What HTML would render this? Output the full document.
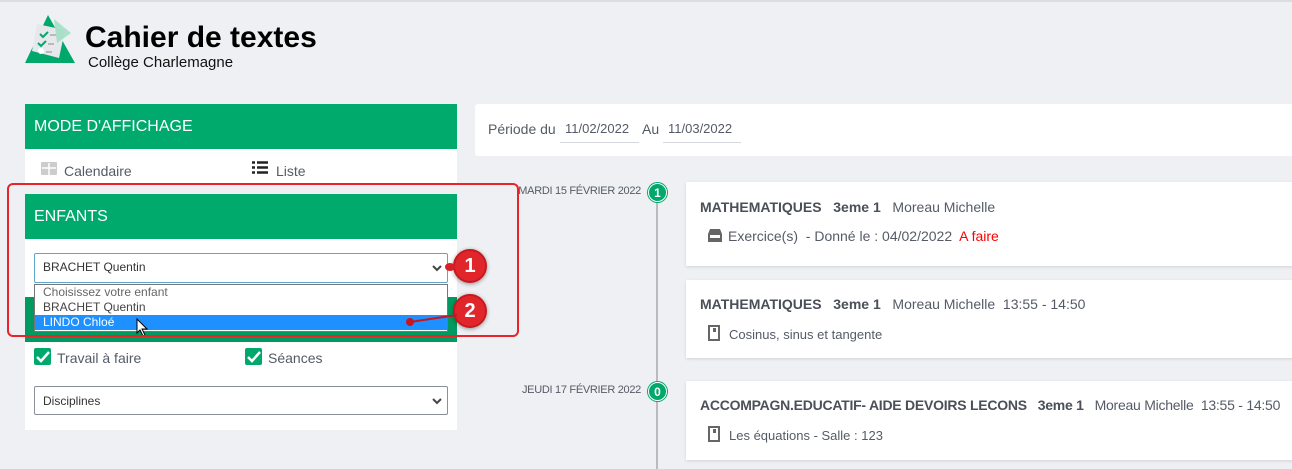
<!DOCTYPE html>
<html><head><meta charset="utf-8"><style>
*{box-sizing:border-box;margin:0;padding:0}
body{width:1292px;height:469px;overflow:hidden;background:#eef0f3;font-family:"Liberation Sans",sans-serif;color:#555b66;position:relative}
.a{position:absolute}
.g{background:#00aa6c;color:#fff;font-size:16px;padding-left:9px;display:flex;align-items:center}
.w{background:#fff}
.card{background:#fff;left:686px;width:620px;box-shadow:0 1px 3px rgba(0,0,0,.12)}
.t{font-size:14px;color:#555b66;white-space:nowrap}
b{color:#4a4f58}
.dot{width:19px;height:19px;border-radius:50%;background:#00a86b;color:#fff;font-size:12px;font-weight:bold;text-align:center;line-height:19px;border:1px solid #fff;box-shadow:0 0 0 1px #00a86b}
.num{width:34px;height:34px;border-radius:50%;background:#e0262b;border:2px solid #c81a1e;color:#fff;font-weight:bold;font-size:20px;text-align:center;line-height:30px;box-shadow:0 1px 4px rgba(0,0,0,.4)}
.cb{width:17px;height:17px;background:#00a86b;border-radius:2px}
</style></head><body>
<div class="a" style="left:0;top:0;width:1292px;height:2px;background:#dcdde0"></div>
<svg class="a" style="left:24px;top:13px" width="52" height="50" viewBox="0 0 52 50">
<polygon points="24,2 51,50 1,50" fill="#00a86b"/>
<polygon points="13,11 41,17 35,45 8,38" fill="#e6e8eb"/>
<polygon points="30,6 47,20 33,30" fill="#8fdcbb" opacity=".7"/>
<path d="M16,21l3,3 5,-5M14,30l3,3 5,-5" stroke="#00a86b" stroke-width="2" fill="none"/>
<path d="M26,22h6M24,31h6M22,39h6" stroke="#aaa" stroke-width="1.5"/>
<circle cx="17" cy="38" r="3" fill="#fff"/>
</svg>
<div class="a" style="left:85px;top:21px;font-size:30px;font-weight:bold;color:#000">Cahier de textes</div>
<div class="a" style="left:88px;top:54px;font-size:15px;color:#111">Collège Charlemagne</div>

<div class="a g" style="left:25px;top:104px;width:432px;height:45px">MODE D'AFFICHAGE</div>
<div class="a w" style="left:25px;top:149px;width:432px;height:34px"></div>
<svg class="a" style="left:41px;top:162px" width="16" height="14"><rect x="0" y="0" width="16" height="13" rx="1" fill="#ccc"/><path d="M1,6h14M8,1v12" stroke="#fff" stroke-width="1.5"/></svg>
<div class="a t" style="left:64px;top:163px;font-size:14px">Calendaire</div>
<svg class="a" style="left:252px;top:161px" width="16" height="14"><path d="M0,1.5h3M5,1.5h11M0,6.5h3M5,6.5h11M0,11.5h3M5,11.5h11" stroke="#222" stroke-width="2.5"/></svg>
<div class="a t" style="left:276px;top:163px">Liste</div>

<div class="a g" style="left:25px;top:194px;width:432px;height:45px">ENFANTS</div>
<div class="a w" style="left:25px;top:239px;width:432px;height:60px"></div>
<div class="a" style="left:34px;top:253px;width:414px;height:30px;border:1px solid #5fa7c8;border-radius:2px;background:#fff;font-size:12px;color:#333;padding:6px 8px">BRACHET Quentin<svg style="position:absolute;right:5px;top:11px" width="10" height="7"><path d="M1,1l4,4 4,-4" stroke="#444" stroke-width="2" fill="none"/></svg></div>
<div class="a g" style="left:25px;top:297px;width:432px;height:45px;background:#009a60"></div>
<div class="a" style="left:34px;top:284px;width:414px;height:48px;background:#fff;border:1px solid #777;font-size:12px;line-height:15px">
<div style="padding-left:8px;color:#666">Choisissez votre enfant</div>
<div style="padding-left:8px;color:#444">BRACHET Quentin</div>
<div style="padding-left:8px;background:#1e90ff;color:#fff">LINDO Chloé</div></div>
<svg class="a" style="left:136px;top:318px" width="14" height="20"><path d="M1,1v14l3,-3 3,6 2,-1 -3,-6h5z" fill="#fff" stroke="#000"/></svg>
<div class="a w" style="left:25px;top:342px;width:432px;height:88px"></div>
<div class="a cb" style="left:34px;top:348px"></div>
<svg class="a" style="left:36px;top:350px" width="14" height="13"><path d="M1,7l4,4 8,-9" stroke="#fff" stroke-width="2.5" fill="none"/></svg>
<div class="a t" style="left:57px;top:350px">Travail à faire</div>
<div class="a cb" style="left:245px;top:348px"></div>
<svg class="a" style="left:247px;top:350px" width="14" height="13"><path d="M1,7l4,4 8,-9" stroke="#fff" stroke-width="2.5" fill="none"/></svg>
<div class="a t" style="left:268px;top:350px">Séances</div>
<div class="a" style="left:34px;top:386px;width:414px;height:29px;border:1px solid #8a8f99;border-radius:2px;background:#fff;font-size:12px;color:#333;padding:7px 8px">Disciplines<svg style="position:absolute;right:5px;top:11px" width="10" height="7"><path d="M1,1l4,4 4,-4" stroke="#444" stroke-width="2" fill="none"/></svg></div>

<div class="a" style="left:7px;top:183px;width:512px;height:154px;border:2px solid #e8232a;border-radius:6px"></div>
<div class="a num" style="left:453px;top:249px">1</div>
<div class="a" style="left:445px;top:263px;width:10px;height:8px;border-radius:50%;background:#d81e27"></div>
<div class="a num" style="left:453px;top:294px">2</div>
<svg class="a" style="left:400px;top:305px" width="60" height="25"><path d="M10,17L57,10" stroke="#c8151f" stroke-width="2"/><circle cx="10" cy="17" r="4" fill="#c8151f"/></svg>

<div class="a w" style="left:475px;top:104px;width:830px;height:52px;border-radius:3px"></div>
<div class="a t" style="left:488px;top:121px">Période du</div>
<div class="a t" style="left:565px;top:121px;font-size:13px">11/02/2022</div>
<div class="a" style="left:560px;top:142px;width:79px;height:1px;background:#d6d8de"></div>
<div class="a t" style="left:642px;top:121px">Au</div>
<div class="a t" style="left:668px;top:121px;font-size:13px">11/03/2022</div>
<div class="a" style="left:663px;top:142px;width:78px;height:1px;background:#d6d8de"></div>

<div class="a" style="left:656px;top:195px;width:2px;height:274px;background:#b9bbbf"></div>
<div class="a t" style="left:512px;top:185px;font-size:11px;width:129px;text-align:right;letter-spacing:-.3px">MARDI 15 FÉVRIER 2022</div>
<div class="a dot" style="left:648px;top:183px">1</div>
<div class="a t" style="left:512px;top:384px;font-size:11px;width:129px;text-align:right;letter-spacing:-.3px">JEUDI 17 FÉVRIER 2022</div>
<div class="a dot" style="left:648px;top:382px">0</div>

<div class="a card" style="top:182px;height:84px"></div>
<div class="a t" style="left:700px;top:199px"><b>MATHEMATIQUES</b>&nbsp;&nbsp; <b>3eme 1</b>&nbsp;&nbsp; Moreau Michelle</div>
<svg class="a" style="left:708px;top:229px" width="14" height="13"><path d="M0,5l2,-5h10l2,5v8h-14z" fill="#666"/><rect x="2" y="6" width="10" height="3" fill="#fff"/></svg>
<div class="a t" style="left:728px;top:228px">Exercice(s)&nbsp; - Donné le : 04/02/2022&nbsp; <span style="color:#f00">A faire</span></div>

<div class="a card" style="top:280px;height:78px"></div>
<div class="a t" style="left:700px;top:296px"><b>MATHEMATIQUES</b>&nbsp;&nbsp; <b>3eme 1</b>&nbsp;&nbsp; Moreau Michelle&nbsp; 13:55 - 14:50</div>
<svg class="a" style="left:708px;top:325px" width="14" height="16"><rect x="1" y="1" width="10" height="14" fill="none" stroke="#666" stroke-width="2"/><rect x="5" y="3" width="3" height="4" fill="#666"/></svg>
<div class="a t" style="left:729px;top:327px;font-size:13px">Cosinus, sinus et tangente</div>

<div class="a card" style="top:381px;height:79px"></div>
<div class="a t" style="left:700px;top:397px;letter-spacing:-.25px"><b>ACCOMPAGN.EDUCATIF- AIDE DEVOIRS LECONS</b>&nbsp;&nbsp; <b>3eme 1</b>&nbsp;&nbsp; Moreau Michelle&nbsp; 13:55 - 14:50</div>
<svg class="a" style="left:708px;top:426px" width="14" height="16"><rect x="1" y="1" width="10" height="14" fill="none" stroke="#666" stroke-width="2"/><rect x="5" y="3" width="3" height="4" fill="#666"/></svg>
<div class="a t" style="left:729px;top:428px;font-size:13px">Les équations - Salle : 123</div>
</body></html>
